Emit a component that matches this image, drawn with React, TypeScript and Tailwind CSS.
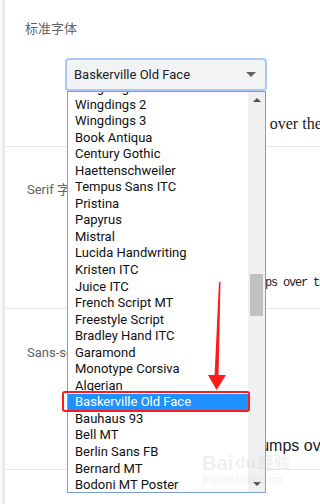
import React from "react";

const fonts = [
  "Wingdings",
  "Wingdings 2",
  "Wingdings 3",
  "Book Antiqua",
  "Century Gothic",
  "Haettenschweiler",
  "Tempus Sans ITC",
  "Pristina",
  "Papyrus",
  "Mistral",
  "Lucida Handwriting",
  "Kristen ITC",
  "Juice ITC",
  "French Script MT",
  "Freestyle Script",
  "Bradley Hand ITC",
  "Garamond",
  "Monotype Corsiva",
  "Algerian",
  "Baskerville Old Face",
  "Bauhaus 93",
  "Bell MT",
  "Berlin Sans FB",
  "Bernard MT",
  "Bodoni MT Poster",
  "Britannic Bold",
];

const selected = "Baskerville Old Face";
const sample = "The quick brown fox jumps over the lazy dog";

export default function App() {
  return (
    <div className="relative w-[320px] h-[504px] overflow-hidden bg-white flex font-['Roboto','Noto_Sans_CJK_SC',sans-serif]">
      {/* card edge */}
      <div className="w-[5px] shrink-0 bg-linear-to-r from-white to-[#e4e4e4]" />

      <div className="flex-1 flex flex-col">
        {/* standard font */}
        <section className="h-[147px] border-b border-[#e6e6e6] pt-[21px]">
          <div className="pl-[20px] text-[13px] leading-[16px] text-[#5f6368]">标准字体</div>
          <div className="ml-[60px] mt-[21px] w-[202px] h-[33px] rounded-[4px] border-2 border-[#a9c8f5] bg-[#f1f3f4] flex items-center pl-[7px] pr-[9px]">
            <span className="flex-1 text-[13px] text-[#202124]">Baskerville Old Face</span>
            <span className="w-0 h-0 border-l-[5px] border-r-[5px] border-t-[5px] border-l-transparent border-r-transparent border-t-[#5f6368]" />
          </div>
          <div className="mt-[23px] pl-[83px] h-[20px] leading-[20px] text-[16px] whitespace-nowrap text-[#202124] font-['Liberation_Serif',serif]">
            {sample}
          </div>
        </section>

        {/* serif */}
        <section className="h-[162px] border-b border-[#e6e6e6] pt-[35px]">
          <div className="pl-[22px] text-[13px] leading-[16px] text-[#5f6368]">Serif 字体</div>
          <div className="mt-[75px] pl-[122px] h-[20px] leading-[20px] text-[12px] tracking-[-1.2px] whitespace-nowrap text-[#202124] font-['Liberation_Mono',monospace]">
            {sample}
          </div>
        </section>

        {/* sans-serif */}
        <section className="h-[161px] border-b border-[#e6e6e6] pt-[36px]">
          <div className="pl-[22px] text-[13px] leading-[16px] text-[#5f6368]">Sans-serif 字体</div>
          <div className="mt-[75px] pl-[104px] h-[20px] leading-[20px] text-[16px] whitespace-nowrap text-[#202124] font-['Liberation_Sans',sans-serif]">
            {sample}
          </div>
        </section>
        <section className="flex-1" />
      </div>

      {/* open dropdown list */}
      <div className="absolute left-[67px] top-[91px] w-[199px] h-[402px] border border-[#7e9fd6] bg-white flex overflow-hidden">
        <div className="flex-1 overflow-hidden">
          <ul className="-mt-[12px]">
            {fonts.map((f) => (
              <li
                key={f}
                className={
                  f === selected
                    ? "h-[16.56px] leading-[16.56px] pl-[7px] text-[13px] text-white bg-[#1e90ff]"
                    : "h-[16.56px] leading-[16.56px] pl-[7px] text-[13px] text-[#111]"
                }
              >
                {f}
              </li>
            ))}
          </ul>
        </div>
        <div className="w-[17px] bg-[#f0f0f0] flex flex-col items-center">
          <div className="mt-[6px] w-0 h-0 border-l-[4px] border-r-[4px] border-b-[4px] border-l-transparent border-r-transparent border-b-[#505050]" />
          <div className="mt-[172px] w-[13px] h-[42px] bg-[#c1c1c1]" />
          <div className="mt-auto mb-[6px] w-0 h-0 border-l-[4px] border-r-[4px] border-t-[4px] border-l-transparent border-r-transparent border-t-[#505050]" />
        </div>
      </div>

      {/* annotation */}
      <div className="absolute left-[62px] top-[391px] w-[188px] h-[21px] rounded-[3px] border-[2.5px] border-[#ff1a1a]" />
      <svg className="absolute left-0 top-0" width="320" height="504">
        <polygon points="219,282 220.5,282 218.5,377 214.5,377" fill="#ff1a1a" />
        <polygon points="208,375 226,375 216.5,390" fill="#ff1a1a" />
      </svg>

      {/* watermark */}
      <div className="absolute left-[202px] top-[452px] flex flex-col items-start opacity-30 pointer-events-none">
        <div className="flex items-end gap-[2px] text-[20px] leading-[22px] font-bold text-[#cfcfcf] font-['Liberation_Sans','Noto_Sans_CJK_SC',sans-serif]">
          <span>Bai</span>
          <span className="text-[17px]">du</span>
          <span className="text-[16px]">经验</span>
        </div>
        <div className="text-[10px] leading-[12px] text-[#cfcfcf] font-['Liberation_Sans',sans-serif]">jingyan.baidu.com</div>
      </div>
    </div>
  );
}
